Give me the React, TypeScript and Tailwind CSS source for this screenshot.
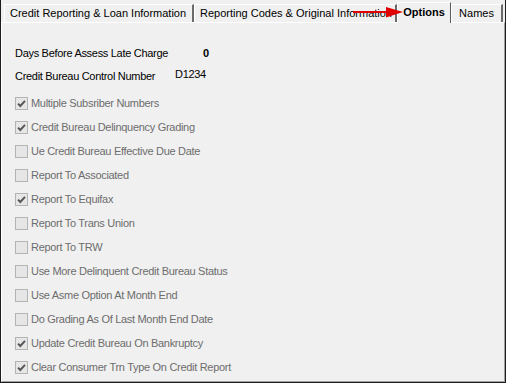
import React from 'react';

type Option = { label: string; checked: boolean };

const options: Option[] = [
  { label: 'Multiple Subsriber Numbers', checked: true },
  { label: 'Credit Bureau Delinquency Grading', checked: true },
  { label: 'Ue Credit Bureau Effective Due Date', checked: false },
  { label: 'Report To Associated', checked: false },
  { label: 'Report To Equifax', checked: true },
  { label: 'Report To Trans Union', checked: false },
  { label: 'Report To TRW', checked: false },
  { label: 'Use More Delinquent Credit Bureau Status', checked: false },
  { label: 'Use Asme Option At Month End', checked: false },
  { label: 'Do Grading As Of Last Month End Date', checked: false },
  { label: 'Update Credit Bureau On Bankruptcy', checked: true },
  { label: 'Clear Consumer Trn Type On Credit Report', checked: true },
];

function Tab({ label, width, active }: { label: string; width: string; active?: boolean }) {
  if (active) {
    return (
      <div
        className={`${width} relative z-10 -mb-px h-[21px] flex items-start justify-center pt-[3px] bg-[#f0f0f0] border-t border-l border-white border-r border-r-[#5a5a5a] font-bold text-black`}
      >
        {label}
      </div>
    );
  }
  return (
    <div
      className={`${width} h-[18px] flex items-center pl-[5px] pb-px overflow-hidden whitespace-nowrap bg-[#f0f0f0] border-t border-l border-white border-r-2 border-r-[#6a6a6a] text-black`}
    >
      {label}
    </div>
  );
}

function DisabledCheck({ checked }: { checked: boolean }) {
  return (
    <span className="w-[13px] h-[13px] shrink-0 border border-[#b4b4b4] bg-[#e6e6e6] flex items-center justify-center">
      {checked && (
        <svg width="11" height="11" viewBox="0 0 11 11">
          <path d="M2 5.6 L4.3 8 L9 2.8" fill="none" stroke="#555555" strokeWidth="1.9" />
        </svg>
      )}
    </span>
  );
}

export default function App() {
  return (
    <div className="w-[506px] h-[383px] flex flex-col bg-[#f0f0f0] border-l border-r border-b border-[#1c1c1c] font-['Liberation_Sans',Arial,sans-serif] text-[11px] leading-[13px]">
      {/* Tab strip */}
      <div className="relative h-[22px] flex items-end pl-[3px]">
        <Tab label="Credit Reporting & Loan Information" width="w-[190px]" />
        <Tab label="Reporting Codes & Original Information" width="w-[203px]" />
        <Tab label="Options" width="w-[54px]" active />
        <div className="w-[52px] h-[18px] flex items-center justify-center pb-px bg-[#f0f0f0] border-t border-l border-white border-r-2 border-r-[#6a6a6a] text-black">
          Names
        </div>
        {/* red annotation arrow */}
        <svg className="absolute left-[352px] top-0 z-20" width="52" height="22" viewBox="0 0 52 22">
          <rect x="0" y="11" width="36" height="2" fill="#e00000" />
          <polygon points="33,7 50,12 33,17.5" fill="#e00000" />
        </svg>
      </div>

      {/* Panel */}
      <div className="flex-1 flex flex-col pt-[19px] pl-[13px] border-t border-l border-white border-r border-b border-r-[#a0a0a0] border-b-[#a0a0a0] tracking-[-0.3px]">
        <div className="h-[23px] flex items-center text-black">
          <span className="w-[160px]">Days Before Assess Late Charge</span>
          <span className="pl-[28px] font-bold">0</span>
        </div>
        <div className="h-[23px] flex items-center text-black">
          <span className="w-[160px]">Credit Bureau Control Number</span>
          <span className="pb-[5px]">D1234</span>
        </div>

        <div className="mt-[3px] flex flex-col">
          {options.map((o) => (
            <div key={o.label} className="h-[24px] flex items-center gap-[3px] text-[#6d6d6d]">
              <DisabledCheck checked={o.checked} />
              <span>{o.label}</span>
            </div>
          ))}
        </div>
      </div>
    </div>
  );
}
